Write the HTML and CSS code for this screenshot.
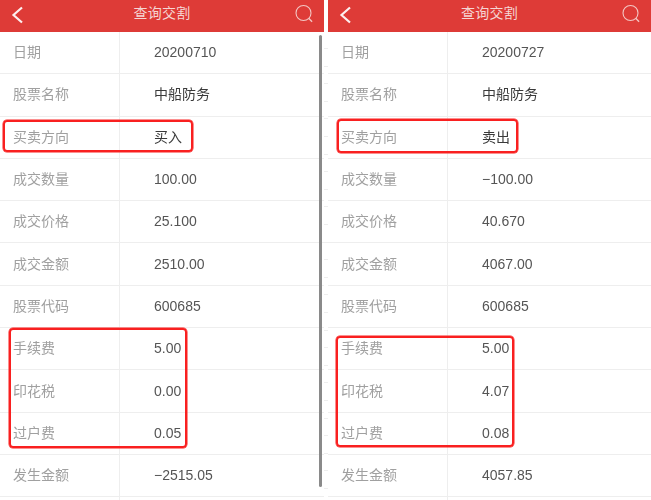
FILE: index.html
```html
<!DOCTYPE html>
<html lang="zh">
<head>
<meta charset="utf-8">
<title>查询交割</title>
<link rel="stylesheet" href="styles.css">
</head>
<body>
<div class="shots">
  <section class="phone phone-left">
    <header class="bar">
      <svg class="back" width="14" height="20" viewBox="0 0 14 20"><path d="M12 2.5 3.5 10l8.5 7.5" fill="none" stroke="#fff" stroke-width="2.2" opacity=".92"/></svg>
      <h1 class="title">查询交割</h1>
      <svg class="search" width="20" height="20" viewBox="0 0 20 20"><circle cx="9.5" cy="9" r="7.5" fill="none" stroke="#f3c6c3" stroke-width="1.1"/><path d="m14.7 14.2 3.4 3.6" stroke="#f3c6c3" stroke-width="1.3"/></svg>
    </header>
    <div class="rows">
      <div class="row"><span class="k">日期</span><span class="v">20200710</span></div>
      <div class="row"><span class="k">股票名称</span><span class="v dark">中船防务</span></div>
      <div class="row"><span class="k">买卖方向</span><span class="v dark">买入</span></div>
      <div class="row"><span class="k">成交数量</span><span class="v">100.00</span></div>
      <div class="row"><span class="k">成交价格</span><span class="v">25.100</span></div>
      <div class="row"><span class="k">成交金额</span><span class="v">2510.00</span></div>
      <div class="row"><span class="k">股票代码</span><span class="v">600685</span></div>
      <div class="row"><span class="k">手续费</span><span class="v">5.00</span></div>
      <div class="row"><span class="k">印花税</span><span class="v">0.00</span></div>
      <div class="row"><span class="k">过户费</span><span class="v">0.05</span></div>
      <div class="row"><span class="k">发生金额</span><span class="v">−2515.05</span></div>
      <div class="row"><span class="k"></span><span class="v"></span></div>
    </div>
    <div class="mark mark-l1"></div>
    <div class="mark mark-l2"></div>
    <div class="scroll"></div>
  </section>
  <div class="gutter"></div>
  <section class="phone phone-right">
    <header class="bar">
      <svg class="back" width="14" height="20" viewBox="0 0 14 20"><path d="M12 2.5 3.5 10l8.5 7.5" fill="none" stroke="#fff" stroke-width="2.2" opacity=".92"/></svg>
      <h1 class="title">查询交割</h1>
      <svg class="search" width="20" height="20" viewBox="0 0 20 20"><circle cx="9.5" cy="9" r="7.5" fill="none" stroke="#f3c6c3" stroke-width="1.1"/><path d="m14.7 14.2 3.4 3.6" stroke="#f3c6c3" stroke-width="1.3"/></svg>
    </header>
    <div class="rows">
      <div class="row"><span class="k">日期</span><span class="v">20200727</span></div>
      <div class="row"><span class="k">股票名称</span><span class="v dark">中船防务</span></div>
      <div class="row"><span class="k">买卖方向</span><span class="v dark">卖出</span></div>
      <div class="row"><span class="k">成交数量</span><span class="v">−100.00</span></div>
      <div class="row"><span class="k">成交价格</span><span class="v">40.670</span></div>
      <div class="row"><span class="k">成交金额</span><span class="v">4067.00</span></div>
      <div class="row"><span class="k">股票代码</span><span class="v">600685</span></div>
      <div class="row"><span class="k">手续费</span><span class="v">5.00</span></div>
      <div class="row"><span class="k">印花税</span><span class="v">4.07</span></div>
      <div class="row"><span class="k">过户费</span><span class="v">0.08</span></div>
      <div class="row"><span class="k">发生金额</span><span class="v">4057.85</span></div>
      <div class="row"><span class="k"></span><span class="v"></span></div>
    </div>
    <div class="mark mark-r1"></div>
    <div class="mark mark-r2"></div>
  </section>
</div>
</body>
</html>
```
FILE: styles.css
```css
* { box-sizing: border-box; }
html, body { margin: 0; padding: 0; background: #fff; }
body { width: 651px; height: 500px; overflow: hidden; font-family: "Noto Sans CJK SC", "Liberation Sans", sans-serif; }
.shots { display: flex; width: 651px; height: 500px; filter: blur(0.35px); }
.phone { position: relative; flex: none; height: 500px; overflow: hidden; }
.phone-left { width: 324px; }
.phone-right { width: 323px; }
.gutter { flex: none; width: 4px; margin-top: 40px; background: repeating-linear-gradient(to bottom, #fff 0, #fff 8px, #eeeeee 8px, #eeeeee 9px, #fff 9px, #fff 17.6px); }
.bar { display: flex; align-items: center; justify-content: center; position: relative; height: 32px; padding-bottom: 8px; background: #de3b37; }
.title { margin: 0; font-size: 14px; font-weight: 400; color: #f5d5d3; letter-spacing: 0.2px; }
.back { position: absolute; left: 10px; top: 5px; }
.search { position: absolute; right: 10px; top: 4px; }
.row { display: grid; grid-template-columns: 120px 1fr; height: 42.3px; border-bottom: 1px solid #eeeeee; align-items: center; }
.k { padding: 0 0 3px 13px; font-size: 14px; color: #a0a0a0; height: 100%; display: flex; align-items: center; border-right: 1px solid #eeeeee; }
.v { padding: 0 0 1px 34px; font-family: "Liberation Sans", "Noto Sans CJK SC", sans-serif; font-size: 14px; color: #555; }
.v.dark { padding-bottom: 3px; color: #3a3a3a; font-family: "Noto Sans CJK SC", sans-serif; }
.mark { position: absolute; border: 2px solid #f92020; border-radius: 4px; box-shadow: 0 0 0 0.5px #f92020; pointer-events: none; }
.mark-l1 { left: 3px; top: 120px; width: 190px; height: 32px; }
.mark-l2 { left: 9px; top: 328px; width: 178px; height: 120px; }
.mark-r1 { left: 9px; top: 119px; width: 181px; height: 34px; }
.mark-r2 { left: 8px; top: 336px; width: 178px; height: 111px; }
.scroll { position: absolute; left: 319px; top: 35px; width: 3px; height: 452px; background: #8a8a8a; border-radius: 2px; }
```
